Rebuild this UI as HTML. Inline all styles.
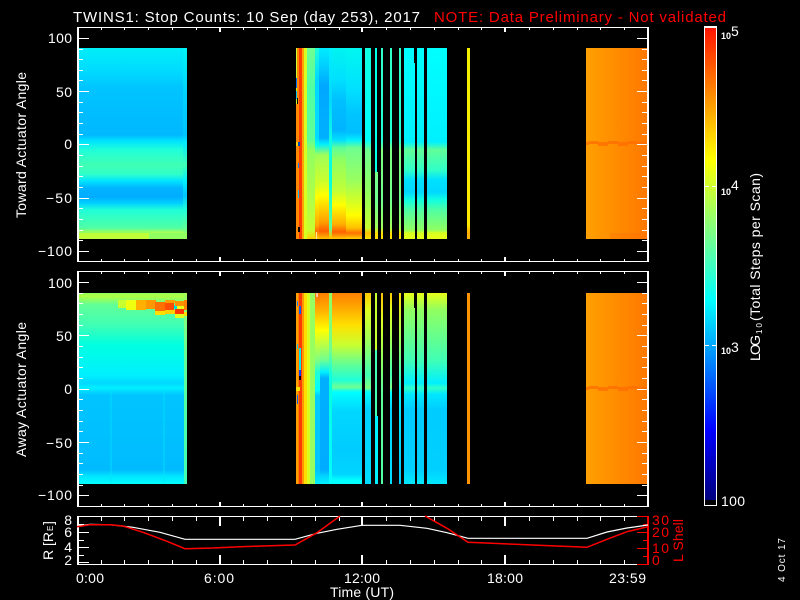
<!DOCTYPE html>
<html><head><meta charset="utf-8"><style>
html,body{margin:0;padding:0;background:#000;width:800px;height:600px;overflow:hidden}
svg{display:block}
text{font-family:"Liberation Sans",sans-serif;fill:#fff}
.r{fill:#f00}
</style></head><body>
<svg width="800" height="600" viewBox="0 0 800 600" xmlns="http://www.w3.org/2000/svg">
<defs>
<linearGradient id="g" gradientUnits="userSpaceOnUse" x1="0" y1="0" x2="0" y2="1000"/>
<linearGradient id="a1" href="#g"><stop offset=".048" stop-color="#00eef8"/><stop offset=".07" stop-color="#00dcff"/><stop offset=".088" stop-color="#00c4ff"/><stop offset=".135" stop-color="#00b8ff"/><stop offset=".141" stop-color="#00e4ff"/><stop offset=".15" stop-color="#20ffd8"/><stop offset=".165" stop-color="#40ffb4"/><stop offset=".174" stop-color="#30ffc8"/><stop offset=".181" stop-color="#00e4ff"/><stop offset=".188" stop-color="#00b4ff"/><stop offset=".197" stop-color="#00acff"/><stop offset=".203" stop-color="#00d0ff"/><stop offset=".21" stop-color="#20ffd8"/><stop offset=".228" stop-color="#50ffa4"/><stop offset=".232" stop-color="#a0ff60"/><stop offset=".236" stop-color="#c8ff38"/><stop offset=".239" stop-color="#d0ff30"/></linearGradient>
<linearGradient id="a1b" href="#g"><stop offset=".048" stop-color="#00f4f4"/><stop offset=".09" stop-color="#00d4ff"/><stop offset=".135" stop-color="#00c4ff"/><stop offset=".142" stop-color="#00eaff"/><stop offset=".165" stop-color="#40ffb4"/><stop offset=".181" stop-color="#00f0ff"/><stop offset=".195" stop-color="#00c4ff"/><stop offset=".21" stop-color="#20ffd8"/><stop offset=".228" stop-color="#60ff98"/><stop offset=".233" stop-color="#90ff68"/><stop offset=".239" stop-color="#a0ff58"/></linearGradient>
<linearGradient id="e1" href="#g"><stop offset=".048" stop-color="#70ff90"/><stop offset=".09" stop-color="#50ffa4"/><stop offset=".14" stop-color="#60ff98"/><stop offset=".15" stop-color="#90ff60"/><stop offset=".2" stop-color="#b0ff48"/><stop offset=".23" stop-color="#c8ff30"/><stop offset=".239" stop-color="#ffd000"/></linearGradient>
<linearGradient id="f1" href="#g"><stop offset=".048" stop-color="#20ffd8"/><stop offset=".08" stop-color="#00d8ff"/><stop offset=".138" stop-color="#00dcff"/><stop offset=".145" stop-color="#00ffe8"/><stop offset=".155" stop-color="#a0ff58"/><stop offset=".185" stop-color="#d0ff28"/><stop offset=".197" stop-color="#ffff00"/><stop offset=".225" stop-color="#ffa800"/><stop offset=".231" stop-color="#ff7000"/><stop offset=".239" stop-color="#ffd000"/></linearGradient>
<linearGradient id="h1" href="#g"><stop offset=".048" stop-color="#00ecff"/><stop offset=".065" stop-color="#00d0ff"/><stop offset=".085" stop-color="#00a8ff"/><stop offset=".138" stop-color="#00b0ff"/><stop offset=".144" stop-color="#00eeff"/><stop offset=".155" stop-color="#a0ff58"/><stop offset=".18" stop-color="#c8ff30"/><stop offset=".195" stop-color="#ffff00"/><stop offset=".222" stop-color="#ffa000"/><stop offset=".231" stop-color="#ff6000"/><stop offset=".235" stop-color="#ff9000"/><stop offset=".239" stop-color="#ffc000"/></linearGradient>
<linearGradient id="k1" href="#g"><stop offset=".048" stop-color="#00f0ff"/><stop offset=".1" stop-color="#00d8ff"/><stop offset=".145" stop-color="#10ffe0"/><stop offset=".18" stop-color="#00ffe0"/><stop offset=".228" stop-color="#60ff98"/><stop offset=".237" stop-color="#ffc000"/></linearGradient>
<linearGradient id="m1" href="#g"><stop offset=".048" stop-color="#00f4f0"/><stop offset=".08" stop-color="#00e0ff"/><stop offset=".1" stop-color="#00c0ff"/><stop offset=".13" stop-color="#00b4ff"/><stop offset=".14" stop-color="#00e0ff"/><stop offset=".148" stop-color="#60ff98"/><stop offset=".16" stop-color="#90ff60"/><stop offset=".19" stop-color="#c0ff38"/><stop offset=".205" stop-color="#ffff00"/><stop offset=".224" stop-color="#ffb000"/><stop offset=".232" stop-color="#ff6000"/><stop offset=".239" stop-color="#ffc800"/></linearGradient>
<linearGradient id="m2" href="#g"><stop offset=".048" stop-color="#00f8f0"/><stop offset=".09" stop-color="#00e0ff"/><stop offset=".115" stop-color="#00c4ff"/><stop offset=".133" stop-color="#00c0ff"/><stop offset=".14" stop-color="#00f0ff"/><stop offset=".148" stop-color="#70ff90"/><stop offset=".18" stop-color="#98ff60"/><stop offset=".2" stop-color="#d0ff28"/><stop offset=".215" stop-color="#ffff00"/><stop offset=".228" stop-color="#ffc000"/><stop offset=".233" stop-color="#ff7000"/><stop offset=".239" stop-color="#ffd000"/></linearGradient>
<linearGradient id="s1" href="#g"><stop offset=".048" stop-color="#10ffe0"/><stop offset=".14" stop-color="#00ffff"/><stop offset=".15" stop-color="#70ff90"/><stop offset=".19" stop-color="#90ff60"/><stop offset=".228" stop-color="#c8ff30"/><stop offset=".233" stop-color="#ffc000"/><stop offset=".239" stop-color="#ffe000"/></linearGradient>
<linearGradient id="s3" href="#g"><stop offset=".048" stop-color="#30ffc8"/><stop offset=".14" stop-color="#20ffd8"/><stop offset=".15" stop-color="#80ff80"/><stop offset=".2" stop-color="#70ff90"/><stop offset=".228" stop-color="#a0ff58"/><stop offset=".233" stop-color="#ffe000"/></linearGradient>
<linearGradient id="s2" href="#g"><stop offset=".048" stop-color="#00ffff"/><stop offset=".142" stop-color="#00f0ff"/><stop offset=".15" stop-color="#60ff98"/><stop offset=".17" stop-color="#30ffc8"/><stop offset=".18" stop-color="#00e0ff"/><stop offset=".192" stop-color="#00d8ff"/><stop offset=".2" stop-color="#10ffe0"/><stop offset=".21" stop-color="#50ffa4"/><stop offset=".23" stop-color="#90ff60"/><stop offset=".233" stop-color="#d8ff20"/><stop offset=".239" stop-color="#e8ff18"/></linearGradient>
<linearGradient id="y1" href="#g"><stop offset=".048" stop-color="#f0f000"/><stop offset=".225" stop-color="#ffe800"/><stop offset=".232" stop-color="#ffb000"/></linearGradient>

<linearGradient id="a2" href="#g"><stop offset=".293" stop-color="#90ff60"/><stop offset=".296" stop-color="#b0ff40"/><stop offset=".305" stop-color="#60ff98"/><stop offset=".325" stop-color="#40ffb4"/><stop offset=".345" stop-color="#00ffe0"/><stop offset=".375" stop-color="#00f0ff"/><stop offset=".383" stop-color="#00d8ff"/><stop offset=".388" stop-color="#00f0ff"/><stop offset=".395" stop-color="#00c4ff"/><stop offset=".47" stop-color="#00bcff"/><stop offset=".476" stop-color="#00e4ff"/><stop offset=".484" stop-color="#00ffff"/></linearGradient>
<linearGradient id="a2b" href="#g"><stop offset=".293" stop-color="#a0ff58"/><stop offset=".32" stop-color="#80ff80"/><stop offset=".36" stop-color="#60ff98"/><stop offset=".4" stop-color="#50ffa4"/><stop offset=".484" stop-color="#40ffb4"/></linearGradient>
<linearGradient id="f2" href="#g"><stop offset=".293" stop-color="#ff7000"/><stop offset=".31" stop-color="#ffb000"/><stop offset=".33" stop-color="#ffff00"/><stop offset=".36" stop-color="#80ff80"/><stop offset=".372" stop-color="#20ffd8"/><stop offset=".39" stop-color="#00ffff"/><stop offset=".396" stop-color="#00ccff"/><stop offset=".47" stop-color="#00c4ff"/><stop offset=".484" stop-color="#00f0ff"/></linearGradient>
<linearGradient id="h2" href="#g"><stop offset=".293" stop-color="#ff8000"/><stop offset=".31" stop-color="#ffb000"/><stop offset=".33" stop-color="#ffff00"/><stop offset=".36" stop-color="#70ff90"/><stop offset=".372" stop-color="#00f0ff"/><stop offset=".378" stop-color="#00b0ff"/><stop offset=".47" stop-color="#00acff"/><stop offset=".476" stop-color="#00d4ff"/><stop offset=".484" stop-color="#00f0ff"/></linearGradient>
<linearGradient id="k2" href="#g"><stop offset=".293" stop-color="#90ff60"/><stop offset=".35" stop-color="#70ff90"/><stop offset=".375" stop-color="#10ffe0"/><stop offset=".39" stop-color="#00ffe0"/><stop offset=".484" stop-color="#00ffff"/></linearGradient>
<linearGradient id="m3" href="#g"><stop offset=".293" stop-color="#ff8000"/><stop offset=".305" stop-color="#ffa000"/><stop offset=".325" stop-color="#ffe000"/><stop offset=".345" stop-color="#c8ff30"/><stop offset=".365" stop-color="#60ff98"/><stop offset=".38" stop-color="#20ffd8"/><stop offset=".387" stop-color="#70ff90"/><stop offset=".392" stop-color="#00ffff"/><stop offset=".41" stop-color="#00d8ff"/><stop offset=".45" stop-color="#00ccff"/><stop offset=".474" stop-color="#00d4ff"/><stop offset=".48" stop-color="#00ffff"/></linearGradient>
<linearGradient id="t1" href="#g"><stop offset=".293" stop-color="#ffc800"/><stop offset=".31" stop-color="#e0ff20"/><stop offset=".34" stop-color="#a0ff58"/><stop offset=".375" stop-color="#40ffb4"/><stop offset=".388" stop-color="#80ff80"/><stop offset=".392" stop-color="#00ffff"/><stop offset=".41" stop-color="#00d0ff"/><stop offset=".484" stop-color="#00dcff"/></linearGradient>
<linearGradient id="t3" href="#g"><stop offset=".293" stop-color="#ffc000"/><stop offset=".32" stop-color="#e0ff20"/><stop offset=".36" stop-color="#90ff60"/><stop offset=".39" stop-color="#60ff98"/><stop offset=".484" stop-color="#50ffa4"/></linearGradient>
<linearGradient id="t4" href="#g"><stop offset=".293" stop-color="#ffe000"/><stop offset=".34" stop-color="#a0ff58"/><stop offset=".38" stop-color="#30ffc8"/><stop offset=".392" stop-color="#00f0ff"/><stop offset=".484" stop-color="#00c8ff"/></linearGradient>
<linearGradient id="t2" href="#g"><stop offset=".293" stop-color="#e8ff18"/><stop offset=".31" stop-color="#90ff60"/><stop offset=".36" stop-color="#40ffb4"/><stop offset=".383" stop-color="#00f0ff"/><stop offset=".388" stop-color="#30ffc8"/><stop offset=".394" stop-color="#00e8ff"/><stop offset=".41" stop-color="#00ccff"/><stop offset=".47" stop-color="#00d0ff"/><stop offset=".484" stop-color="#00e8ff"/></linearGradient>

<linearGradient id="o" gradientUnits="userSpaceOnUse" x1="586" y1="0" x2="647" y2="0"><stop offset="0" stop-color="#ffa000"/><stop offset=".5" stop-color="#ff8c00"/><stop offset="1" stop-color="#ff7800"/></linearGradient>
<linearGradient id="cb" href="#g"><stop offset=".028" stop-color="#ff1400"/><stop offset=".16" stop-color="#ffff00"/><stop offset=".23" stop-color="#80ff80"/><stop offset=".3" stop-color="#00ffff"/><stop offset=".43" stop-color="#0000ff"/><stop offset=".499" stop-color="#000080"/></linearGradient>
</defs>

<g shape-rendering="crispEdges">
<!-- Panel 1 data -->
<rect x="78" y="48" width="105" height="191" fill="url(#a1)"/>
<rect x="183" y="48" width="4" height="191" fill="url(#a1b)"/>
<rect x="78" y="232" width="71" height="7" fill="#c0ff38"/>
<rect x="78" y="231" width="71" height="2" fill="#90ff60"/>
<rect x="149" y="233" width="38" height="6" fill="#90ff60"/>

<rect x="296" y="48" width="3" height="191" fill="#ff8800"/>
<rect x="296" y="48" width="1" height="56" fill="#c8ff30"/>
<rect x="299" y="48" width="3" height="191" fill="#ff3c00"/>
<rect x="302" y="48" width="2" height="191" fill="#ffa400"/>
<rect x="304" y="48" width="3" height="191" fill="#d8ff20"/>
<rect x="307" y="48" width="8" height="191" fill="url(#e1)"/>
<rect x="315" y="48" width="4" height="191" fill="url(#f1)"/>
<rect x="319" y="48" width="10" height="191" fill="url(#h1)"/>
<rect x="329" y="48" width="3" height="191" fill="url(#k1)"/>
<rect x="332" y="48" width="14" height="191" fill="url(#m1)"/>
<rect x="346" y="48" width="16" height="191" fill="url(#m2)"/>
<rect x="296" y="78" width="1" height="10" fill="#0070ff"/>
<rect x="296" y="91" width="1" height="8" fill="#00c0ff"/>
<rect x="297" y="98" width="1" height="6" fill="#000"/>
<rect x="296" y="142" width="3" height="4" fill="#ffd000"/>
<rect x="298" y="142" width="2" height="4" fill="#0040c0"/>
<rect x="298" y="163" width="1" height="5" fill="#0080ff"/>
<rect x="298" y="190" width="1" height="8" fill="#00c0ff"/>
<rect x="298" y="227" width="2" height="5" fill="#000"/>
<rect x="316" y="232" width="1" height="7" fill="#ffe8a0"/>

<rect x="365" y="48" width="6" height="191" fill="url(#s1)"/>
<rect x="375" y="48" width="2" height="124" fill="#00ffe8"/>
<rect x="375" y="172" width="3" height="67" fill="url(#s3)"/>
<rect x="381" y="48" width="2" height="191" fill="url(#s3)"/>
<rect x="390" y="48" width="2" height="191" fill="url(#s3)"/>
<rect x="399" y="48" width="2" height="191" fill="url(#s3)"/>
<rect x="404" y="48" width="10" height="191" fill="url(#s2)"/>
<rect x="414" y="63" width="1" height="176" fill="url(#s2)"/>
<rect x="417" y="48" width="7" height="191" fill="url(#s2)"/>
<rect x="427" y="48" width="20" height="191" fill="url(#s2)"/>
<rect x="467" y="48" width="3" height="191" fill="url(#y1)"/>

<rect x="586" y="48" width="61" height="191" fill="url(#o)"/>
<path d="M586 142h3v3h-3zM589 141h9v3h-9zM598 142h10v4h-10zM608 141h10v3h-10zM618 142h10v4h-10zM628 141h9v3h-9zM637 142h10v3h-10z" fill="#ff6c00" opacity=".75"/>
<rect x="610" y="233" width="37" height="6" fill="#ff6c00" opacity=".3"/>

<!-- Panel 2 data -->
<rect x="78" y="293" width="106" height="191" fill="url(#a2)"/>
<rect x="184" y="293" width="3" height="191" fill="url(#a2b)"/>
<rect x="110" y="390" width="2" height="94" fill="#00e8f8" opacity=".35"/>
<rect x="163" y="390" width="2" height="94" fill="#00e8f8" opacity=".35"/>
<rect x="118" y="300" width="10" height="8" fill="#c8ff30"/>
<rect x="126" y="300" width="10" height="10" fill="#f0ff10"/>
<rect x="136" y="300" width="10" height="10" fill="#ffb000"/>
<rect x="146" y="300" width="10" height="9" fill="#ff9800"/>
<rect x="155" y="302" width="10" height="9" fill="#ff7000"/>
<rect x="155" y="311" width="10" height="4" fill="#ffe000"/>
<rect x="165" y="300" width="10" height="3" fill="#ffa000"/>
<rect x="165" y="303" width="9" height="7" fill="#ff4c00"/>
<rect x="165" y="310" width="10" height="4" fill="#ffd000"/>
<rect x="174" y="305" width="3" height="4" fill="#00e0e0"/>
<rect x="177" y="306" width="7" height="3" fill="#e8ff18"/>
<rect x="175" y="309" width="9" height="5" fill="#ff3400"/>
<rect x="175" y="314" width="9" height="4" fill="#e0ff20"/>
<rect x="175" y="301" width="9" height="5" fill="#ff9000"/>
<rect x="184" y="300" width="3" height="10" fill="#ff8000"/>
<rect x="184" y="312" width="3" height="4" fill="#ffe000"/>

<rect x="296" y="293" width="2" height="191" fill="#ffa000"/>
<rect x="298" y="293" width="1" height="191" fill="#ff8000"/>
<rect x="299" y="293" width="3" height="191" fill="#ff3c00"/>
<rect x="302" y="293" width="2" height="191" fill="#ff9800"/>
<rect x="304" y="293" width="3" height="191" fill="#ffe000"/>
<rect x="307" y="293" width="3" height="191" fill="#d8ff20"/>
<rect x="310" y="293" width="5" height="191" fill="#98ff60"/>
<rect x="315" y="293" width="5" height="191" fill="url(#f2)"/>
<rect x="320" y="293" width="9" height="191" fill="url(#h2)"/>
<rect x="329" y="293" width="3" height="191" fill="url(#k2)"/>
<rect x="332" y="293" width="30" height="191" fill="url(#m3)"/>
<rect x="297" y="301" width="1" height="5" fill="#0080ff"/>
<rect x="299" y="306" width="2" height="8" fill="#0060ff"/>
<rect x="297" y="344" width="1" height="5" fill="#00c0ff"/>
<rect x="299" y="348" width="2" height="30" fill="#00e8e8"/>
<rect x="299" y="370" width="2" height="6" fill="#0040ff"/>
<rect x="299" y="376" width="2" height="4" fill="#000"/>
<rect x="297" y="395" width="1" height="9" fill="#0060ff"/>
<rect x="296" y="387" width="4" height="4" fill="#ffe000"/>
<rect x="316" y="293" width="2" height="4" fill="#ffc8a0"/>

<rect x="365" y="293" width="6" height="191" fill="url(#t1)"/>
<rect x="375" y="293" width="2" height="57" fill="#c8ff30"/>
<rect x="375" y="350" width="2" height="66" fill="#40ffb4"/>
<rect x="375" y="416" width="3" height="68" fill="#00f0ff"/>
<rect x="381" y="293" width="2" height="191" fill="url(#t3)"/>
<rect x="390" y="293" width="2" height="191" fill="url(#t1)"/>
<rect x="399" y="293" width="2" height="191" fill="url(#t4)"/>
<rect x="404" y="293" width="10" height="191" fill="url(#t2)"/>
<rect x="414" y="308" width="1" height="176" fill="url(#t2)"/>
<rect x="417" y="293" width="7" height="191" fill="url(#t2)"/>
<rect x="427" y="293" width="20" height="191" fill="url(#t2)"/>
<rect x="467" y="293" width="3" height="191" fill="#ff9400"/>
<rect x="586" y="293" width="61" height="191" fill="url(#o)"/>
<path d="M586 387h3v3h-3zM589 386h9v3h-9zM598 387h10v4h-10zM608 386h10v3h-10zM618 387h10v4h-10zM628 386h9v3h-9zM637 387h10v3h-10z" fill="#ff6c00" opacity=".75"/>

<!-- Panel frames -->
<g fill="#fff">
<rect x="77" y="27" width="2" height="235"/><rect x="647" y="27" width="2" height="235"/>
<rect x="77" y="27" width="572" height="1"/><rect x="77" y="261" width="572" height="1"/>
<rect x="77" y="271" width="2" height="236"/><rect x="647" y="271" width="2" height="236"/>
<rect x="77" y="271" width="572" height="1"/><rect x="77" y="506" width="572" height="1"/>
<rect x="77" y="516" width="2" height="48"/>
<rect x="77" y="516" width="571" height="1"/><rect x="77" y="564" width="571" height="1"/>
</g>
<rect x="647" y="516" width="2" height="49" fill="#f00"/>
</g>

<!-- Ticks panel 1 & 2 -->
<path shape-rendering="crispEdges" stroke="#fff" stroke-width="1" fill="none" d="
M78 38.5h11M78 91.5h11M78 144.5h11M78 198.5h11M78 251.5h11
M637 38.5h10M637 91.5h10M637 144.5h10M637 198.5h10M637 251.5h10
M78 49.5h5M78 59.5h5M78 70.5h5M78 80.5h5M78 102.5h5M78 112.5h5M78 123.5h5M78 134.5h5M78 155.5h5M78 166.5h5M78 176.5h5M78 187.5h5M78 208.5h5M78 219.5h5M78 230.5h5M78 240.5h5
M642 49.5h5M642 59.5h5M642 70.5h5M642 80.5h5M642 102.5h5M642 112.5h5M642 123.5h5M642 134.5h5M642 155.5h5M642 166.5h5M642 176.5h5M642 187.5h5M642 208.5h5M642 219.5h5M642 230.5h5M642 240.5h5
M78 282.5h11M78 335.5h11M78 389.5h11M78 442.5h11M78 495.5h11
M637 282.5h10M637 335.5h10M637 389.5h10M637 442.5h10M637 495.5h10
M78 293.5h5M78 303.5h5M78 314.5h5M78 325.5h5M78 346.5h5M78 357.5h5M78 367.5h5M78 378.5h5M78 399.5h5M78 410.5h5M78 421.5h5M78 431.5h5M78 453.5h5M78 463.5h5M78 474.5h5M78 485.5h5
M642 293.5h5M642 303.5h5M642 314.5h5M642 325.5h5M642 346.5h5M642 357.5h5M642 367.5h5M642 378.5h5M642 399.5h5M642 410.5h5M642 421.5h5M642 431.5h5M642 453.5h5M642 463.5h5M642 474.5h5M642 485.5h5
"/>
<!-- X ticks -->
<g shape-rendering="crispEdges" fill="#fff">
<path d="M101 28h1v2h-1zM124 28h1v2h-1zM148 28h1v2h-1zM172 28h1v2h-1zM196 28h1v2h-1zM243 28h1v2h-1zM267 28h1v2h-1zM291 28h1v2h-1zM315 28h1v2h-1zM339 28h1v2h-1zM386 28h1v2h-1zM410 28h1v2h-1zM434 28h1v2h-1zM458 28h1v2h-1zM481 28h1v2h-1zM529 28h1v2h-1zM553 28h1v2h-1zM577 28h1v2h-1zM600 28h1v2h-1zM624 28h1v2h-1z"/>
<path d="M219 28h2v4h-2zM361 28h2v4h-2zM504 28h2v4h-2z"/>
<path d="M101 259h1v2h-1zM124 259h1v2h-1zM148 259h1v2h-1zM172 259h1v2h-1zM196 259h1v2h-1zM243 259h1v2h-1zM267 259h1v2h-1zM291 259h1v2h-1zM315 259h1v2h-1zM339 259h1v2h-1zM386 259h1v2h-1zM410 259h1v2h-1zM434 259h1v2h-1zM458 259h1v2h-1zM481 259h1v2h-1zM529 259h1v2h-1zM553 259h1v2h-1zM577 259h1v2h-1zM600 259h1v2h-1zM624 259h1v2h-1z"/>
<path d="M219 257h2v4h-2zM361 257h2v4h-2zM504 257h2v4h-2z"/>
<path d="M101 272h1v2h-1zM124 272h1v2h-1zM148 272h1v2h-1zM172 272h1v2h-1zM196 272h1v2h-1zM243 272h1v2h-1zM267 272h1v2h-1zM291 272h1v2h-1zM315 272h1v2h-1zM339 272h1v2h-1zM386 272h1v2h-1zM410 272h1v2h-1zM434 272h1v2h-1zM458 272h1v2h-1zM481 272h1v2h-1zM529 272h1v2h-1zM553 272h1v2h-1zM577 272h1v2h-1zM600 272h1v2h-1zM624 272h1v2h-1z"/>
<path d="M219 272h2v4h-2zM361 272h2v4h-2zM504 272h2v4h-2z"/>
<path d="M101 504h1v2h-1zM124 504h1v2h-1zM148 504h1v2h-1zM172 504h1v2h-1zM196 504h1v2h-1zM243 504h1v2h-1zM267 504h1v2h-1zM291 504h1v2h-1zM315 504h1v2h-1zM339 504h1v2h-1zM386 504h1v2h-1zM410 504h1v2h-1zM434 504h1v2h-1zM458 504h1v2h-1zM481 504h1v2h-1zM529 504h1v2h-1zM553 504h1v2h-1zM577 504h1v2h-1zM600 504h1v2h-1zM624 504h1v2h-1z"/>
<path d="M219 502h2v4h-2zM361 502h2v4h-2zM504 502h2v4h-2z"/>
<!-- panel 3 -->
<path d="M101 517h1v4h-1zM124 517h1v4h-1zM148 517h1v4h-1zM172 517h1v4h-1zM196 517h1v4h-1zM243 517h1v4h-1zM267 517h1v4h-1zM291 517h1v4h-1zM315 517h1v4h-1zM339 517h1v4h-1zM386 517h1v4h-1zM410 517h1v4h-1zM434 517h1v4h-1zM458 517h1v4h-1zM481 517h1v4h-1zM529 517h1v4h-1zM553 517h1v4h-1zM577 517h1v4h-1zM600 517h1v4h-1zM624 517h1v4h-1z"/>
<path d="M219 517h2v9h-2zM361 517h2v9h-2zM504 517h2v9h-2z"/>
<path d="M101 560h1v4h-1zM124 560h1v4h-1zM148 560h1v4h-1zM172 560h1v4h-1zM196 560h1v4h-1zM243 560h1v4h-1zM267 560h1v4h-1zM291 560h1v4h-1zM315 560h1v4h-1zM339 560h1v4h-1zM386 560h1v4h-1zM410 560h1v4h-1zM434 560h1v4h-1zM458 560h1v4h-1zM481 560h1v4h-1zM529 560h1v4h-1zM553 560h1v4h-1zM577 560h1v4h-1zM600 560h1v4h-1zM624 560h1v4h-1z"/>
<path d="M219 555h2v9h-2zM361 555h2v9h-2zM504 555h2v9h-2z"/>
<path d="M78 532h11v1H78zM78 547h11v1H78zM78 562h11v1H78zM78 540h6v1h-6zM78 555h6v1h-6zM78 524h6v1h-6z"/>
</g>
<path shape-rendering="crispEdges" stroke="#f00" fill="none" d="M637 516.5h10M637 532.5h10M637 548.5h10M637 564.5h11M643 524.5h4M643 540.5h4M643 556.5h4"/>

<!-- Curves -->
<polyline fill="none" stroke="#fff" stroke-width="1.2" points="77,526 90,524.3 110,524.7 133,527.3 160,532.3 185,539.3 295,539.3 317,533.3 337,529.3 362,525.3 400,525.3 427,528.3 447,532.7 468,538.3 587,538.3 607,532 627,528 648,525"/>
<polyline fill="none" stroke="#f00" stroke-width="1.5" points="77,526.7 90,524.7 110,524.7 123,526 143,532.3 167,541.3 185,548.7 213,548 240,546.7 295,545 317,532.7 340,516"/>
<polyline fill="none" stroke="#f00" stroke-width="1.5" points="425,516 447,528.3 468,542.3 492,543.3 515,544.3 538,545.3 587,547.3 607,539.3 627,531.7 648,526.7"/>

<!-- Colorbar -->
<g shape-rendering="crispEdges">
<rect x="704.5" y="26.5" width="12" height="479" fill="none" stroke="#fff" stroke-width="1"/>
<rect x="704" y="26" width="13" height="2" fill="#fff"/>
<rect x="705" y="28" width="11" height="472" fill="url(#cb)"/>
<rect x="705" y="500" width="11" height="5" fill="#000"/>
<rect x="704" y="186" width="5" height="1" fill="#fff"/><rect x="712" y="186" width="4" height="1" fill="#fff"/>
<rect x="705" y="345" width="4" height="1" fill="#fff"/><rect x="712" y="345" width="4" height="1" fill="#fff"/>
</g>

<!-- Title -->
<text x="73" y="22" font-size="15" textLength="347" lengthAdjust="spacing">TWINS1: Stop Counts: 10 Sep (day 253), 2017</text>
<text class="r" x="434" y="22" font-size="15" textLength="292" lengthAdjust="spacing">NOTE: Data Preliminary - Not validated</text>

<!-- Y labels -->
<g font-size="14" text-anchor="end">
<text x="72" y="43" textLength="24">100</text><text x="72" y="97" textLength="16">50</text><text x="72" y="149">0</text><text x="72" y="203" textLength="26">−50</text><text x="72" y="256" textLength="34">−100</text>
<text x="72" y="288" textLength="24">100</text><text x="72" y="341" textLength="16">50</text><text x="72" y="394">0</text><text x="72" y="448" textLength="26">−50</text><text x="72" y="500" textLength="34">−100</text>
<text x="72" y="525">8</text><text x="72" y="537">6</text><text x="72" y="552">4</text><text x="72" y="565">2</text>
</g>
<text transform="translate(26 218) rotate(-90)" font-size="14" textLength="146" lengthAdjust="spacing">Toward Actuator Angle</text>
<text transform="translate(26 457) rotate(-90)" font-size="14" textLength="135" lengthAdjust="spacing">Away Actuator Angle</text>
<text transform="translate(53 560) rotate(-90)" font-size="14" textLength="28" lengthAdjust="spacing">R [R</text>
<text transform="translate(53 531) rotate(-90)" font-size="8">E</text>
<text transform="translate(53 525) rotate(-90)" font-size="14">]</text>

<!-- Red axis labels -->
<g font-size="14">
<text class="r" x="652" y="525" textLength="17">30</text><text class="r" x="652" y="537" textLength="17">20</text><text class="r" x="652" y="553" textLength="17">10</text><text class="r" x="652" y="565">0</text>
<text class="r" transform="translate(683 562) rotate(-90)" textLength="43" lengthAdjust="spacing">L Shell</text>
</g>

<!-- X labels -->
<g font-size="14">
<text x="76" y="583" textLength="28">0:00</text><text x="204" y="583" textLength="30">6:00</text><text x="344" y="583" textLength="36">12:00</text><text x="487" y="583" textLength="36">18:00</text><text x="609" y="583" textLength="37">23:59</text>
<text x="330" y="597" textLength="64" lengthAdjust="spacing">Time (UT)</text>
</g>

<!-- Colorbar labels -->
<text x="721" y="39" font-size="9" font-weight="bold" textLength="10">10</text><text x="731" y="36" font-size="14">5</text>
<text x="721" y="195" font-size="9" font-weight="bold" textLength="10">10</text><text x="731" y="190" font-size="14">4</text>
<text x="721" y="354" font-size="9" font-weight="bold" textLength="10">10</text><text x="731" y="352" font-size="14">3</text>
<text x="721" y="506" font-size="14" textLength="24">100</text>
<text transform="translate(760 361) rotate(-90)" font-size="14" textLength="26" lengthAdjust="spacing">LOG</text>
<text transform="translate(762 334) rotate(-90)" font-size="8" textLength="11">10</text>
<text transform="translate(760 321) rotate(-90)" font-size="14" textLength="148" lengthAdjust="spacing">(Total Steps per Scan)</text>
<text transform="translate(785 582) rotate(-90)" font-size="10" textLength="44" lengthAdjust="spacing">4 Oct 17</text>
</svg>
</body></html>
